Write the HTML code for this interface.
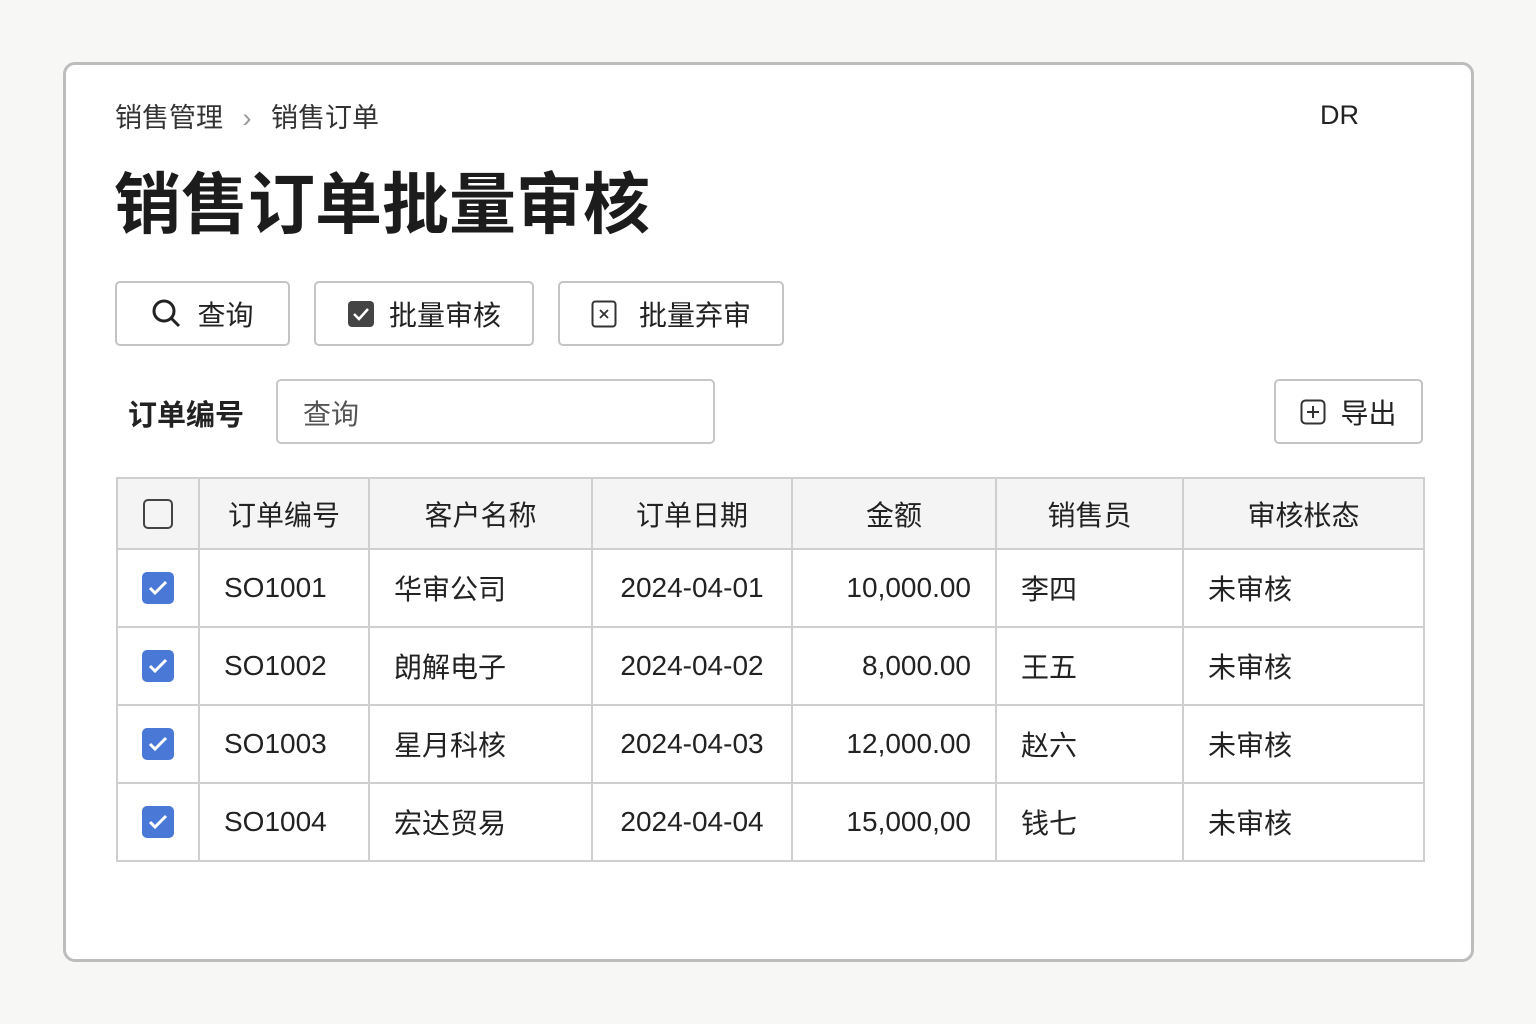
<!DOCTYPE html>
<html><head><meta charset="utf-8"><style>
*{box-sizing:border-box;margin:0;padding:0}
body{width:1536px;height:1024px;background:#f7f7f5;font-family:"Liberation Sans","Noto Sans CJK SC",sans-serif;color:#222;position:relative;overflow:hidden}
.card{position:absolute;left:63px;top:62px;width:1411px;height:900px;background:#fff;border:3px solid #bdbdbd;border-radius:12px}
.abs{position:absolute}
.btn{position:absolute;top:281px;height:65px;border:2px solid #c4c4c4;border-radius:5px;background:#fff;display:flex;align-items:center;justify-content:center;font-size:28px;gap:14px}
table{position:absolute;left:116px;top:477px;border-collapse:collapse;font-size:28px}
td,th{border:2px solid #cfcfcf;height:78px;padding:0 24px}
th{height:71px;background:#f4f4f4;font-weight:normal;text-align:center}
.cb{width:32px;height:32px;border-radius:5px;background:#4a78d6;margin:auto;display:flex;align-items:center;justify-content:center}
</style></head><body>
<div class="card"></div>
<div class="abs" style="left:115px;top:96px;font-size:27px;color:#333">销售管理 <span style="color:#999;margin:0 12px">›</span> 销售订单</div>
<div class="abs" style="left:1320px;top:100px;font-size:27px">DR</div>
<div class="abs" style="left:114px;top:162px;font-size:67px;font-weight:bold;color:#1c1c1c;line-height:1.3">销售订单批量审核</div>
<div class="btn" style="left:115px;width:175px"><svg width="32" height="32" viewBox="0 0 32 32"><circle cx="13" cy="13" r="10" fill="none" stroke="#222" stroke-width="3"/><path d="M20 20l8 8" stroke="#222" stroke-width="3"/></svg>查询</div>
<div class="btn" style="left:314px;width:220px"><svg width="28" height="28" viewBox="0 0 28 28"><rect x="1" y="1" width="26" height="26" rx="4" fill="#444"/><path d="M7 14l5 5 9-10" stroke="#fff" stroke-width="2.5" fill="none"/></svg>批量审核</div>
<div class="btn" style="left:558px;width:226px;gap:22px"><svg width="26" height="28" viewBox="0 0 26 28"><rect x="1.5" y="1.5" width="23" height="25" rx="3" fill="none" stroke="#333" stroke-width="2"/><path d="M9 10l8 8M17 10l-8 8" stroke="#333" stroke-width="1.8"/></svg>批量弃审</div>
<div class="abs" style="left:128px;top:392px;font-size:29px;font-weight:bold">订单编号</div>
<div class="abs" style="left:276px;top:379px;width:439px;height:65px;border:2px solid #c8c8c8;border-radius:5px;font-size:28px;color:#555;padding:12px 0 0 25px">查询</div>
<div class="btn" style="left:1274px;top:379px;width:149px;height:65px"><svg width="26" height="26" viewBox="0 0 26 26"><rect x="1.5" y="1.5" width="23" height="23" rx="4" fill="none" stroke="#333" stroke-width="2"/><path d="M13 7v12M7 13h12" stroke="#333" stroke-width="2"/></svg>导出</div>
<table>
<tr><th style="width:82px"><div style="width:30px;height:30px;border:2px solid #444;border-radius:5px;margin:auto"></div></th><th style="width:170px">订单编号</th><th style="width:223px">客户名称</th><th style="width:200px">订单日期</th><th style="width:204px">金额</th><th style="width:187px">销售员</th><th style="width:241px">审核枨态</th></tr>
<tr><td><div class="cb"><svg width="20" height="16"><path d="M2 8l5 5 11-11" stroke="#fff" stroke-width="3" fill="none"/></svg></div></td><td>SO1001</td><td>华审公司</td><td style="text-align:center">2024-04-01</td><td style="text-align:right">10,000.00</td><td>李四</td><td>未审核</td></tr>
<tr><td><div class="cb"><svg width="20" height="16"><path d="M2 8l5 5 11-11" stroke="#fff" stroke-width="3" fill="none"/></svg></div></td><td>SO1002</td><td>朗解电子</td><td style="text-align:center">2024-04-02</td><td style="text-align:right">8,000.00</td><td>王五</td><td>未审核</td></tr>
<tr><td><div class="cb"><svg width="20" height="16"><path d="M2 8l5 5 11-11" stroke="#fff" stroke-width="3" fill="none"/></svg></div></td><td>SO1003</td><td>星月科核</td><td style="text-align:center">2024-04-03</td><td style="text-align:right">12,000.00</td><td>赵六</td><td>未审核</td></tr>
<tr><td><div class="cb"><svg width="20" height="16"><path d="M2 8l5 5 11-11" stroke="#fff" stroke-width="3" fill="none"/></svg></div></td><td>SO1004</td><td>宏达贸易</td><td style="text-align:center">2024-04-04</td><td style="text-align:right">15,000,00</td><td>钱七</td><td>未审核</td></tr>
</table>
</body></html>
